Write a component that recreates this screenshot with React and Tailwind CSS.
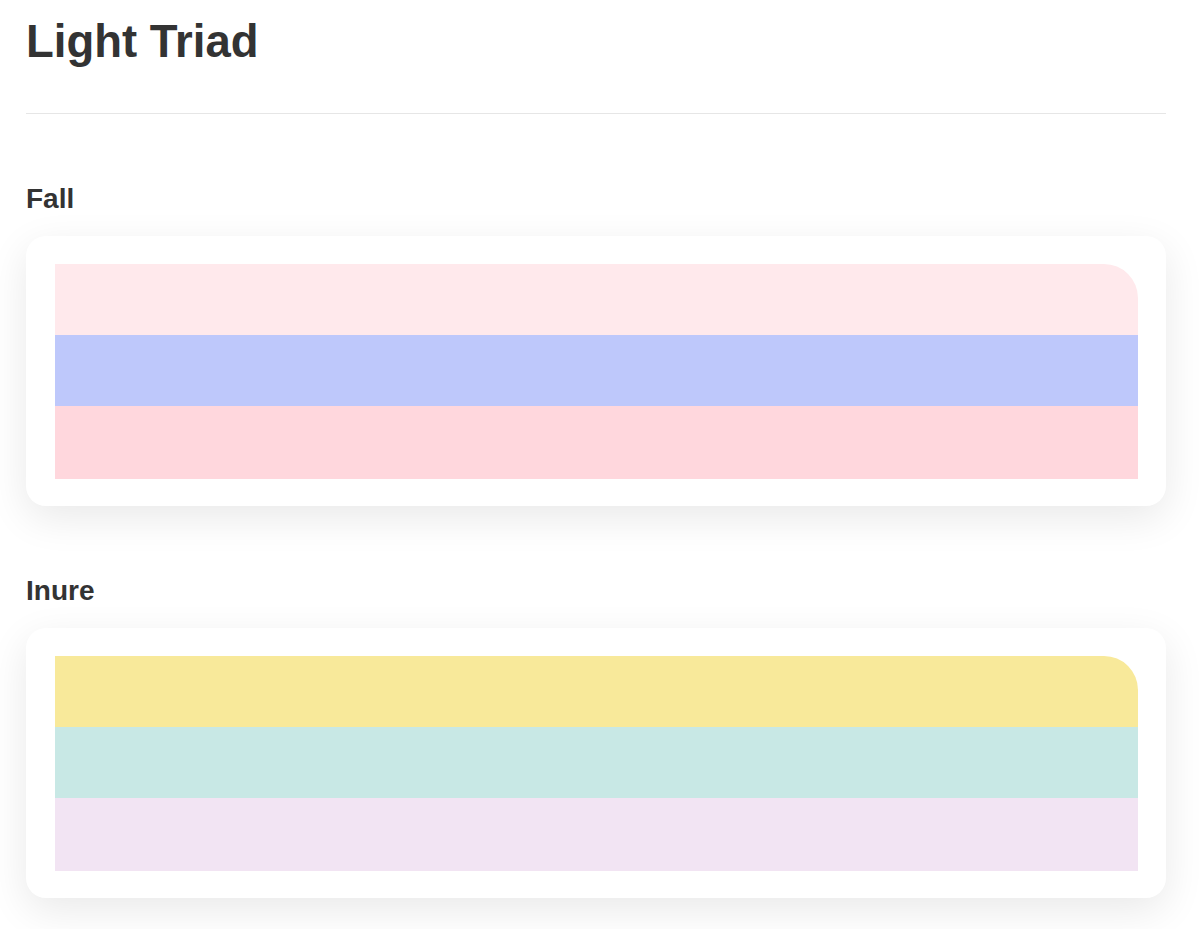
const palettes = [
  { name: "Fall", colors: ["#ffe9ec", "#bec8fb", "#ffd7dd"] },
  { name: "Inure", colors: ["#f8e99a", "#c8e8e5", "#f2e4f3"] },
];

function Palette({ name, colors }) {
  return (
    <section className="mt-[68px]">
      <h2 className="text-[28px] font-bold leading-[34px] text-[#333333]">{name}</h2>
      <div className="mt-[20px] rounded-[20px] bg-white pt-[28px] pb-[27px] pl-[29px] pr-[28px] shadow-[0_12px_40px_rgba(0,0,0,0.09)]">
        <div className="flex flex-col overflow-hidden rounded-tr-[34px]">
          <div className="h-[71px]" style={{ backgroundColor: colors[0] }} />
          <div className="h-[71px]" style={{ backgroundColor: colors[1] }} />
          <div className="h-[73px]" style={{ backgroundColor: colors[2] }} />
        </div>
      </div>
    </section>
  );
}

export default function App() {
  return (
    <div
      className="min-h-screen bg-white px-[26px] pt-[14px] pb-10"
      style={{ fontFamily: '"Liberation Sans", Arial, sans-serif' }}
    >
      <div className="w-[1140px]">
        <h1 className="text-[45.5px] font-bold leading-[56px] text-[#333333]">Light Triad</h1>
        <hr className="mt-[43px] border-t border-[#e6e6e6]" />
        {palettes.map((p) => (
          <Palette key={p.name} name={p.name} colors={p.colors} />
        ))}
      </div>
    </div>
  );
}
